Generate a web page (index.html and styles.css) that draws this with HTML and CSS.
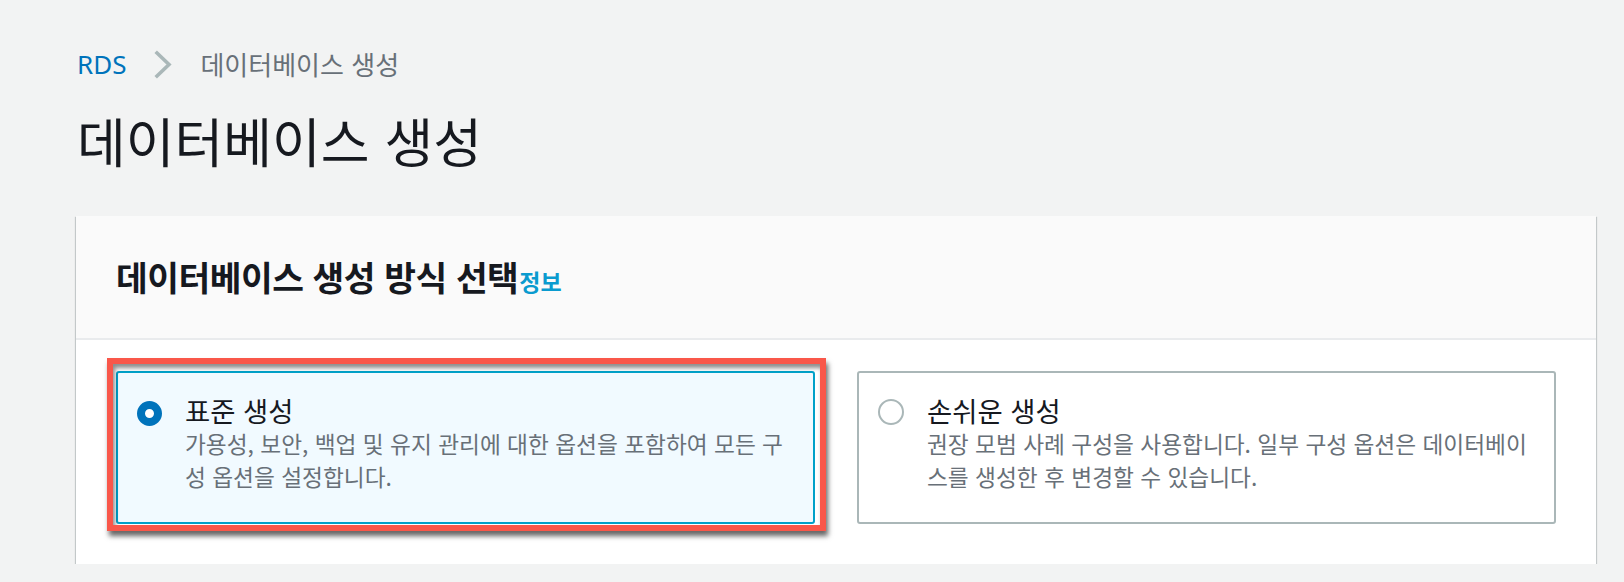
FILE: index.html
```html
<!DOCTYPE html>
<html lang="ko">
<head>
<meta charset="utf-8">
<title>데이터베이스 생성</title>
<link rel="stylesheet" href="styles.css">
</head>
<body>
<div class="page">
  <nav class="breadcrumbs">
    <a class="crumb-link" href="#">RDS</a>
    <svg class="crumb-sep" width="18" height="29" viewBox="0 0 18 29" aria-hidden="true"><polyline points="3,3 15,14.5 3,26" fill="none" stroke="#aab7b8" stroke-width="3.6" stroke-linecap="square"/></svg>
    <span class="crumb-current">데이터베이스 생성</span>
  </nav>
  <h1 class="page-title">데이터베이스 생성</h1>
  <section class="card">
    <header class="card-header">
      <h2 class="card-title">데이터베이스 생성 방식 선택</h2><a class="info-link" href="#">정보</a>
    </header>
    <div class="card-body">
      <div class="tiles">
        <div class="tile tile-selected">
          <span class="radio radio-checked"></span>
          <div class="tile-text">
            <div class="tile-label">표준 생성</div>
            <div class="tile-desc">가용성, 보안, 백업 및 유지 관리에 대한 옵션을 포함하여 모든 구성 옵션을 설정합니다.</div>
          </div>
          <div class="annotation"></div>
        </div>
        <div class="tile">
          <span class="radio"></span>
          <div class="tile-text">
            <div class="tile-label">손쉬운 생성</div>
            <div class="tile-desc">권장 모범 사례 구성을 사용합니다. 일부 구성 옵션은 데이터베이스를 생성한 후 변경할 수 있습니다.</div>
          </div>
        </div>
      </div>
    </div>
  </section>
</div>
</body>
</html>
```

FILE: styles.css
```css
html, body {
  margin: 0;
  padding: 0;
}
body {
  background: #f2f3f3;
  font-family: "Noto Sans CJK KR", "Noto Sans", sans-serif;
  color: #16191f;
}
.page {
  padding: 44px 28px 0 76px;
}
.breadcrumbs {
  display: flex;
  align-items: center;
  gap: 28px;
  height: 40px;
  padding-left: 1px;
}
.crumb-link {
  font-family: "Noto Sans", sans-serif;
  font-size: 26px;
  color: #0073bb;
  text-decoration: none;
  line-height: 40px;
}
.crumb-sep {
  display: block;
}
.crumb-current {
  font-size: 26px;
  line-height: 40px;
  color: #687078;
}
.page-title {
  margin: 24px 0 0 0;
  font-size: 53px;
  line-height: 64px;
  font-weight: 400;
  color: #16191f;
  padding-left: 1px;
}
.card {
  margin-top: 44px;
  background: #ffffff;
  box-shadow: 0 1px 1px 0 rgba(0, 28, 36, .3), 1px 1px 1px 0 rgba(0, 28, 36, .15), -1px 1px 1px 0 rgba(0, 28, 36, .15);
}
.card-header {
  display: flex;
  align-items: baseline;
  height: 124px;
  box-sizing: border-box;
  padding: 38px 40px 0 40px;
  background: #fafafa;
  border-bottom: 2px solid #e9ebed;
}
.card-title {
  margin: 0;
  font-size: 34.5px;
  line-height: 44px;
  font-weight: 700;
  letter-spacing: -0.5px;
}
.info-link {
  font-size: 23px;
  font-weight: 700;
  color: #0a9bcf;
  text-decoration: none;
  margin-left: 1px;
}
.card-body {
  padding: 31px 40px 40px 40px;
}
.tiles {
  display: grid;
  grid-template-columns: 1fr 1fr;
  gap: 42px;
}
.tile {
  position: relative;
  display: flex;
  align-items: flex-start;
  gap: 23px;
  height: 153px;
  box-sizing: border-box;
  padding: 21px 12px 0 19px;
  border: 2px solid #aab7b8;
  border-radius: 3px;
  background: #ffffff;
}
.tile-selected {
  border-color: #00a1c9;
  background: #f1faff;
}
.radio {
  flex: none;
  box-sizing: border-box;
  width: 26px;
  height: 26px;
  margin-top: 5px;
  border-radius: 50%;
  border: 2.5px solid #aab7b8;
  background: #ffffff;
}
.radio-checked {
  width: 25px;
  height: 25px;
  margin-top: 7px;
  border: 8.5px solid #0073bb;
}
.tile-text {
  flex: 1;
  max-width: 604px;
}
.tile-label {
  font-size: 27.4px;
  line-height: 33px;
  color: #16191f;
}
.tile-desc {
  font-size: 22.7px;
  line-height: 33px;
  color: #687078;
  word-break: break-all;
}
.annotation {
  position: absolute;
  top: -15px;
  left: -11px;
  right: -13px;
  bottom: -9px;
  border: 6px solid #f9574a;
  box-shadow: 2px 5px 5px rgba(0, 0, 0, .6), inset 2px 4px 4px rgba(0, 0, 0, .45);
  pointer-events: none;
}
```
